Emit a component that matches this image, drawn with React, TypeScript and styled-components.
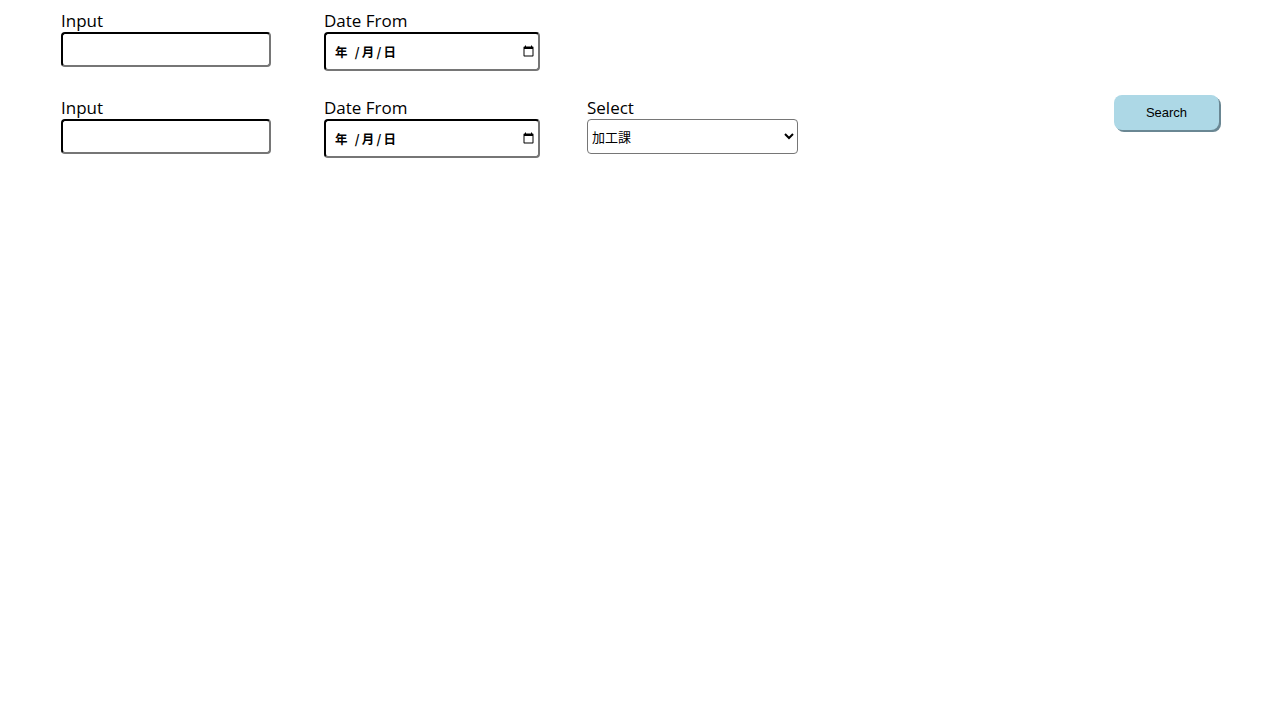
import React from "react";
import styled, { createGlobalStyle } from "styled-components";

const Global = createGlobalStyle`
  html, body { margin: 0; padding: 0; background: #fff; }
  body { font-family: "Open Sans", "Noto Sans CJK JP", sans-serif; }
`;

const Page = styled.div`
  padding: 10px 61px 0 61px;
  display: flex;
  flex-direction: column;
`;

const Row = styled.div`
  display: flex;
  align-items: flex-start;
  height: 87px;
`;

const Field = styled.div`
  width: 263px;
  display: flex;
  flex-direction: column;
`;

const Label = styled.label`
  font-family: "Open Sans", sans-serif;
  font-size: 17px;
  line-height: 22px;
  color: #000;
`;

const TextInput = styled.input`
  box-sizing: border-box;
  width: 210px;
  height: 35px;
  border: 2px inset #767676;
  border-color: #1f1f1f #767676 #767676 #1f1f1f;
  border-radius: 4px;
  background: #fff;
  padding: 0 4px;
  font-size: 13px;
`;

const DateBox = styled.div`
  position: relative;
  width: 216px;
  height: 39px;
`;

const DateInput = styled.input`
  box-sizing: border-box;
  width: 216px;
  height: 39px;
  border: 2px inset #767676;
  border-color: #1f1f1f #767676 #767676 #1f1f1f;
  border-radius: 4px;
  background: #fff;
  padding: 0 1px 0 8px;
  font-size: 13px;
  &::-webkit-datetime-edit {
    color: transparent;
  }
  &::-webkit-calendar-picker-indicator {
    margin: 0;
  }
`;

const DatePlaceholder = styled.span`
  position: absolute;
  left: 11px;
  top: 0;
  height: 38px;
  display: flex;
  align-items: center;
  font-family: "Noto Sans CJK JP", sans-serif;
  font-size: 12.5px;
  font-weight: 700;
  letter-spacing: 2.2px;
  color: #000;
  pointer-events: none;
  white-space: pre;
`;

const Select = styled.select`
  box-sizing: border-box;
  width: 211px;
  height: 35px;
  border: 1px solid #767676;
  border-radius: 4px;
  background: #fff;
  font-family: "Noto Sans CJK JP", sans-serif;
  font-size: 13px;
  color: #000;
`;

const Spacer = styled.div`
  flex: 1;
`;

const SearchButton = styled.button`
  box-sizing: border-box;
  width: 105px;
  height: 35px;
  margin-top: -2px;
  border: none;
  border-radius: 8px;
  background: #add8e6;
  box-shadow: 2px 2px 0 #6a8793;
  font-family: "Liberation Sans", Arial, sans-serif;
  font-size: 13px;
  color: #000;
`;

function DateField() {
  return (
    <DateBox>
      <DateInput type="date" lang="ja" />
      <DatePlaceholder>{"年 /月/日"}</DatePlaceholder>
    </DateBox>
  );
}

export default function App() {
  return (
    <>
      <Global />
      <Page>
        <Row>
          <Field>
            <Label>Input</Label>
            <TextInput type="text" />
          </Field>
          <Field>
            <Label>Date From</Label>
            <DateField />
          </Field>
        </Row>
        <Row>
          <Field>
            <Label>Input</Label>
            <TextInput type="text" />
          </Field>
          <Field>
            <Label>Date From</Label>
            <DateField />
          </Field>
          <Field>
            <Label>Select</Label>
            <Select defaultValue="加工課">
              <option value="加工課">加工課</option>
            </Select>
          </Field>
          <Spacer />
          <SearchButton type="button">Search</SearchButton>
        </Row>
      </Page>
    </>
  );
}
